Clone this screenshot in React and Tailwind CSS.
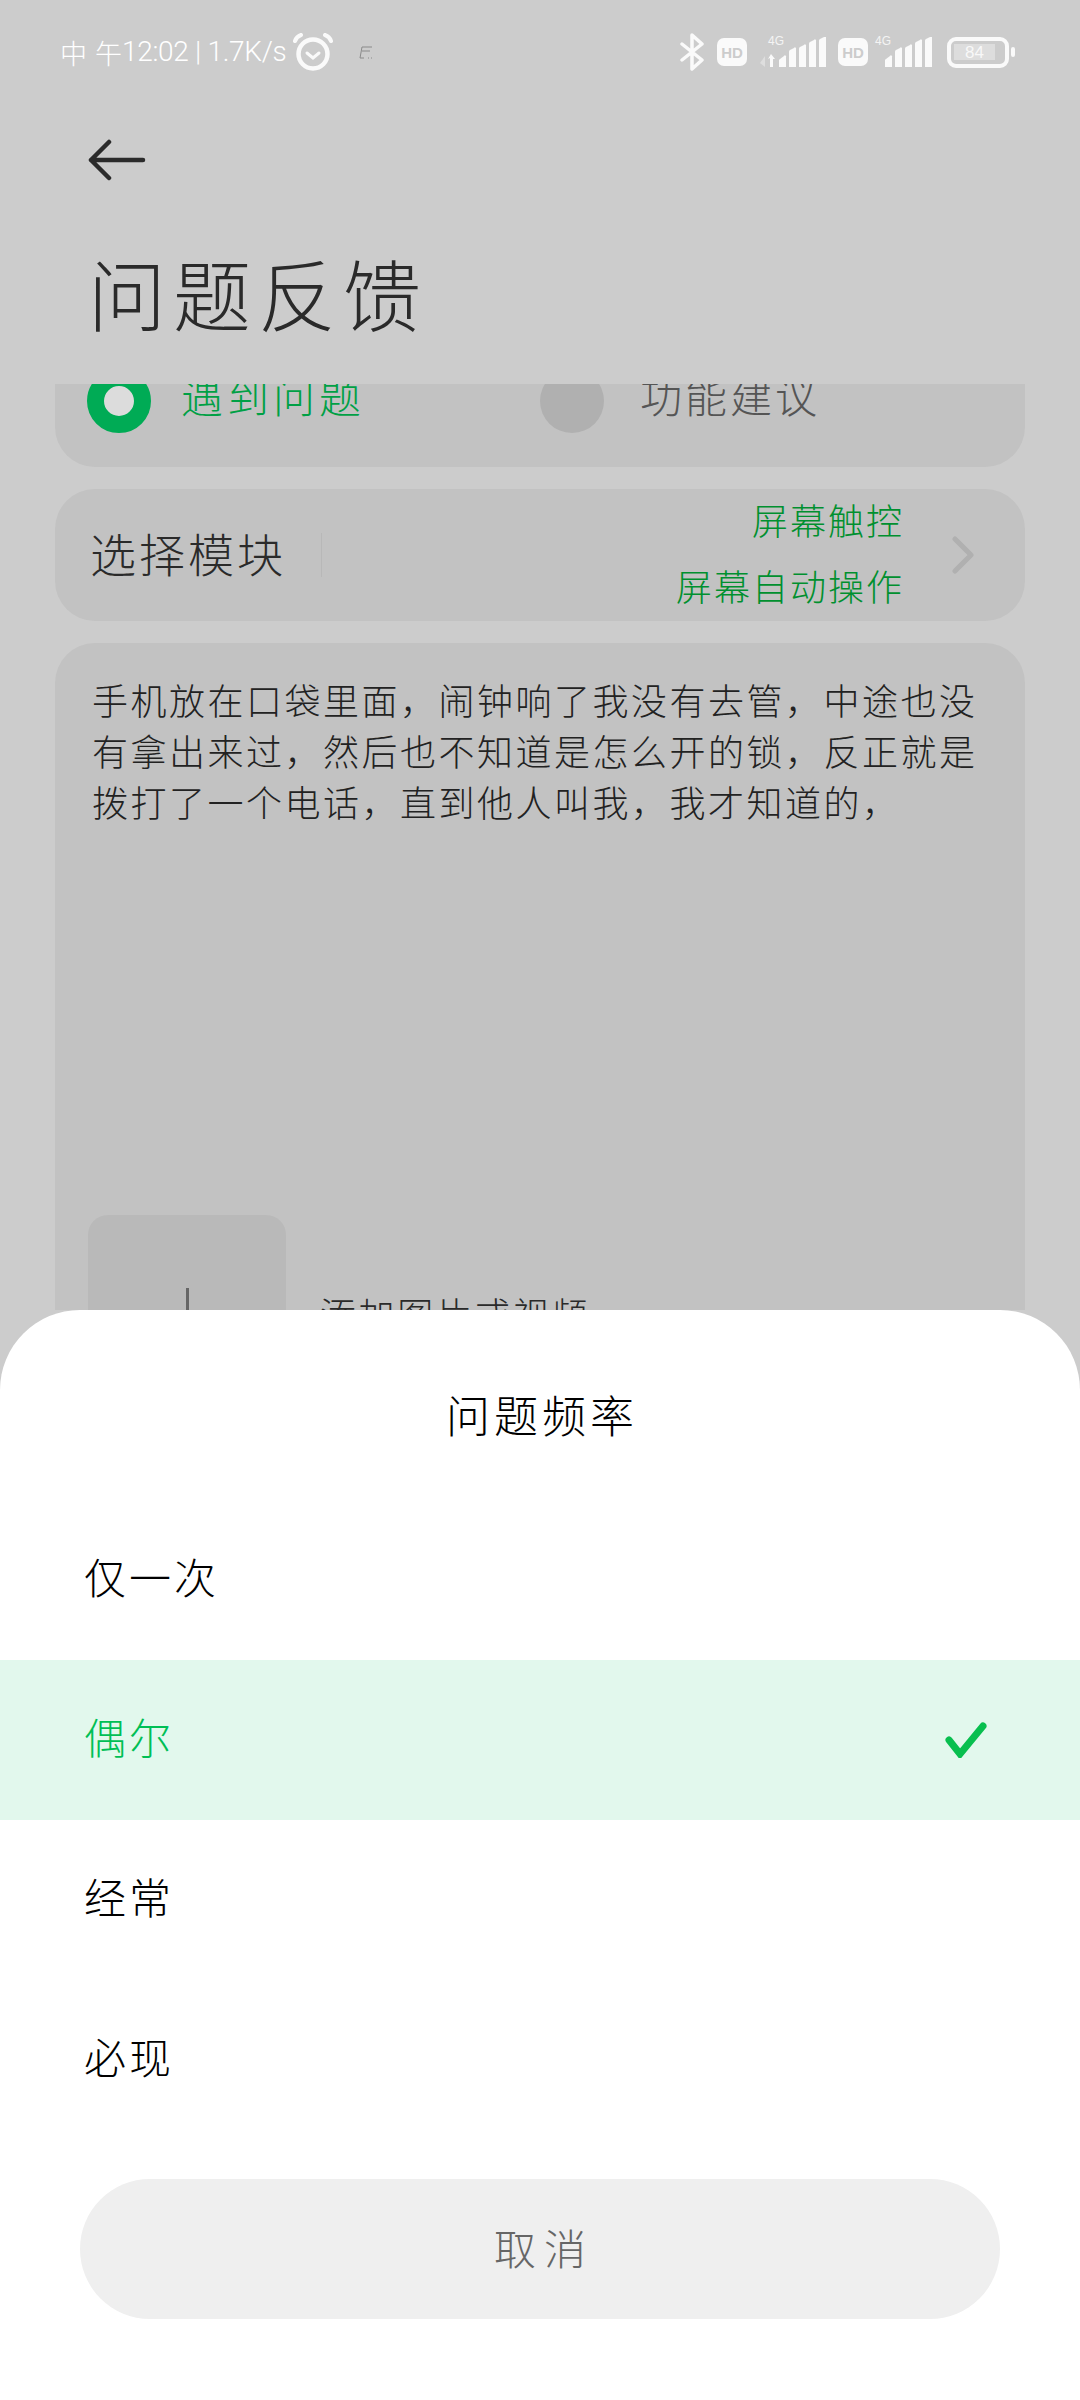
import React from 'react';

const cjk = 'font-["Noto_Sans_CJK_SC","Noto_Sans",sans-serif]';

const feedbackText =
  '手机放在口袋里面\uFF0C闹钟响了我没有去管\uFF0C中途也没有拿出来过\uFF0C然后也不知道是怎么开的锁\uFF0C反正就是拨打了一个电话\uFF0C直到他人叫我\uFF0C我才知道的\uFF0C';

const SignalBars = () => (
  <svg width="47" height="30" viewBox="0 0 47 30" fill="#fafafa">
    <path d="M0 30v-6a2 2 0 0 1 1-2l4-3a1 1 0 0 1 2 1v10z" />
    <path d="M10 30V15a2 2 0 0 1 1-2l4-2a1 1 0 0 1 2 1v18z" />
    <path d="M20 30V12a2 2 0 0 1 1-2l4-2a1 1 0 0 1 2 1v21z" />
    <path d="M30 30V7a2 2 0 0 1 1-2l4-2a1 1 0 0 1 2 1v26z" />
    <path d="M40 30V4a2 2 0 0 1 1-2l4-2a1 1 0 0 1 2 1v29z" />
  </svg>
);

const HdBadge = () => (
  <div className="w-[30px] h-[28px] rounded-[7px] bg-[#fafafa] flex items-center justify-center text-[15px] leading-none font-bold text-[#cccccc] font-['Liberation_Sans',sans-serif]">
    HD
  </div>
);

const FourG = ({ className }) => (
  <span className={`absolute top-[-2px] text-[12px] leading-none text-[#f4f4f4] font-['Liberation_Sans',sans-serif] ${className}`}>
    4G
  </span>
);

const StatusBar = () => (
  <div className="h-[104px] flex items-center justify-between pl-[60px] pr-[65px]">
    <div className="flex items-center text-white">
      <span className={`text-[27px] leading-none tracking-[8px] font-light ${cjk}`}>中午</span>
      <span className="ml-[-8px] text-[28px] leading-none tracking-[-0.3px] font-light font-['Roboto',sans-serif]">12:02 | 1.7K/s</span>
      <svg className="ml-[7px]" width="40" height="38" viewBox="0 0 40 38" fill="none" stroke="#fafafa" strokeLinecap="round">
        <circle cx="20" cy="21" r="14.5" strokeWidth="4.5" />
        <path d="M14 20l6 5 6-5" strokeWidth="3" />
        <path d="M2 8c1-3 3-5 6-6M38 8c-1-3-3-5-6-6" strokeWidth="4" />
      </svg>
      <svg className="ml-[26px]" width="14" height="13" viewBox="0 0 14 13" fill="none" stroke="#8a8a8a" strokeWidth="1">
        <path d="M3 1h10M3 1L1 12h4M3 5h8M9 12h1M12 12h1" />
      </svg>
    </div>
    <div className="flex items-center">
      <svg width="24" height="38" viewBox="0 0 24 38" fill="none" stroke="#fafafa" strokeWidth="3.5" strokeLinecap="round" strokeLinejoin="round">
        <path d="M2 11l20 16-10 9V2l10 9L2 27" />
      </svg>
      <div className="ml-[13px]"><HdBadge /></div>
      <div className="relative ml-[13px] flex items-end w-[66px] h-[30px]">
        <FourG className="left-[8px]" />
        <svg width="16" height="13" viewBox="0 0 16 13" className="mr-[3px]">
          <path d="M5 2v11L0 9z" fill="#dedede" />
          <path d="M10 13V4l-2 1 3-5 4 5h-2v8z" fill="#fafafa" />
        </svg>
        <SignalBars />
      </div>
      <div className="ml-[12px]"><HdBadge /></div>
      <div className="relative ml-[17px] w-[47px] h-[30px]">
        <FourG className="left-[-10px]" />
        <SignalBars />
      </div>
      <div className="ml-[15px] w-[62px] h-[31px] rounded-[9px] border-[4px] border-[#fafafa] flex items-center justify-start pl-[3px]">
        <div className="w-[41px] h-[16px] bg-[#dddddd] flex items-center justify-center text-[17px] leading-none text-[#f8f8f8] font-['Liberation_Sans',sans-serif]">
          84
        </div>
      </div>
      <div className="ml-[2px] w-[4px] h-[10px] rounded-full bg-[#fafafa]" />
    </div>
  </div>
);

const Header = () => (
  <div className="h-[280px] pl-[88px] pt-[35px]">
    <svg className="block" width="58" height="42" viewBox="0 0 58 42" fill="none" stroke="#2b2b2b" strokeWidth="4.5" strokeLinecap="round" strokeLinejoin="round">
      <path d="M55 21H3M21 3L3 21l18 18" />
    </svg>
    <h1 className={`mt-[61px] text-[78px] leading-[100px] tracking-[7px] font-light text-[#2a2a2a] ${cjk}`}>问题反馈</h1>
  </div>
);

const TypeCard = () => (
  <div className="-mt-[44px] h-[127px] rounded-[40px] bg-[#c2c2c2] pl-[32px] pt-[29px] flex items-start">
    <div className="w-[64px] h-[64px] rounded-full border-[17px] border-[#00ab55] bg-[#dcdcdc]" />
    <span className={`ml-[30px] text-[42px] leading-[52px] tracking-[4px] font-light text-[#00a045] ${cjk}`}>遇到问题</span>
    <div className="ml-[175px] w-[64px] h-[64px] rounded-full bg-[#b0b0b0]" />
    <span className={`ml-[36px] text-[42px] leading-[52px] tracking-[3px] font-light text-[#555555] ${cjk}`}>功能建议</span>
  </div>
);

const ModuleCard = () => (
  <div className="mt-[22px] h-[132px] rounded-[40px] bg-[#c2c2c2] pl-[35px] flex items-center">
    <span className={`-mt-[6px] text-[46px] leading-none tracking-[3px] font-light text-[#2a2a2a] ${cjk}`}>选择模块</span>
    <div className="ml-[35px] w-px h-[44px] bg-[#b8b8b8]" />
    <div className={`-mt-[6px] flex-1 flex flex-col items-end text-[36px] leading-[66px] tracking-[2px] font-light text-[#00902f] ${cjk}`}>
      <span>屏幕触控</span>
      <span>屏幕自动操作</span>
    </div>
    <svg className="ml-[47px] mr-[50px]" width="24" height="38" viewBox="0 0 24 38" fill="none" stroke="#b0b0b0" strokeWidth="5" strokeLinecap="round" strokeLinejoin="round">
      <path d="M4 3l16 16L4 35" />
    </svg>
  </div>
);

const ContentCard = () => (
  <div className="mt-[22px] h-[900px] rounded-[40px] bg-[#c2c2c2] pt-[31px] pl-[37px] pr-[33px]">
    <p className={`text-[36px] leading-[51px] tracking-[2.5px] font-light text-[#222222] ${cjk}`}>
      {feedbackText}
    </p>
    <div className="mt-[388px] -ml-[4px] flex items-start">
      <div className="w-[198px] h-[198px] rounded-[20px] bg-[#b9b9b9] flex justify-center pt-[73px]">
        <div className="w-[3px] h-[60px] bg-[#666666]" />
      </div>
      <span className={`ml-[34px] mt-[75px] text-[36px] leading-[46px] tracking-[2.6px] font-light text-[#2a2a2a] ${cjk}`}>添加图片或视频</span>
    </div>
  </div>
);

const options = [
  { label: '仅一次' },
  { label: '偶尔', active: true },
  { label: '经常' },
  { label: '必现' },
];

const FrequencySheet = () => (
  <div className="absolute left-0 right-0 top-[1310px] bottom-0 bg-white rounded-t-[80px] flex flex-col">
    <div className={`h-[190px] pt-[76px] pl-[4px] text-center text-[44px] leading-[56px] tracking-[4px] font-light text-black ${cjk}`}>问题频率</div>
    {options.map((o) => (
      <div
        key={o.label}
        className={`h-[160px] pl-[84px] pr-[93px] flex items-center justify-between ${o.active ? 'bg-[#e2f8ed] text-[#00bf55]' : 'text-black'}`}
      >
        <span className={`-mt-[8px] text-[42px] leading-none tracking-[3px] font-light ${cjk}`}>{o.label}</span>
        {o.active && (
          <svg width="42" height="36" viewBox="0 0 42 36" fill="none" stroke="#08bf4f" strokeWidth="7" strokeLinecap="round" strokeLinejoin="miter">
            <path d="M4 18l11 14L38 4" />
          </svg>
        )}
      </div>
    ))}
    <div className={`mt-[39px] mx-[80px] h-[140px] rounded-[70px] bg-[#efefef] flex items-center justify-center pb-[6px] pl-[8px] text-[42px] tracking-[8px] font-light text-[#666666] ${cjk}`}>
      取消
    </div>
  </div>
);

const App = () => {
  return (
    <div className="relative w-[1080px] h-[2400px] overflow-hidden bg-[#cccccc]">
      <StatusBar />
      <Header />
      <div className="h-[926px] overflow-hidden px-[55px]">
        <TypeCard />
        <ModuleCard />
        <ContentCard />
      </div>
      <FrequencySheet />
    </div>
  );
};

export default App;
